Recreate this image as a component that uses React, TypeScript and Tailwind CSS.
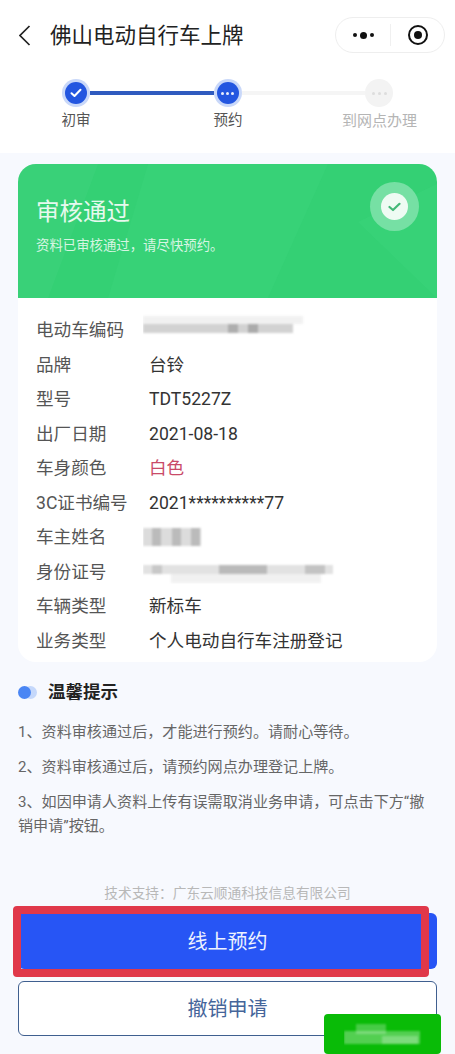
import React from 'react';

const rows = [
  { label: '品牌', value: '台铃' },
  { label: '型号', value: 'TDT5227Z' },
  { label: '出厂日期', value: '2021-08-18' },
  { label: '车身颜色', value: '白色', red: true },
  { label: '3C证书编号', value: '2021**********77' },
];

const tips = [
  '1、资料审核通过后，才能进行预约。请耐心等待。',
  '2、资料审核通过后，请预约网点办理登记上牌。',
  '3、如因申请人资料上传有误需取消业务申请，可点击下方“撤销申请”按钮。',
];

// mosaic over the masked values
const Mosaic = ({ w, h, cells, fill = '#8a8a8a' }: { w: number; h: number; cells: number[][]; fill?: string }) => (
  <svg width={w} height={h} viewBox={`0 0 ${w} ${h}`} className="block">
    <g style={{ filter: 'blur(1px)' }}>
      {cells.map(([x, y, cw, ch, o], i) => (
        <rect key={i} x={x} y={y} width={cw} height={ch} fill={fill} opacity={o} />
      ))}
    </g>
  </svg>
);

const Row = ({ label, children }: { label: string; children: React.ReactNode }) => (
  <div className="grid grid-cols-[113px_1fr] items-center h-[34.5px]">
    <span className="text-[#555]">{label}</span>
    {children}
  </div>
);

const App = () => {
  return (
    <div className="relative w-[455px] h-[1054px] overflow-hidden bg-[#f7f9fe] font-['Roboto','Noto_Sans_CJK_SC',sans-serif]">
      <div className="bg-white h-[153px]">
        <div className="flex items-center h-[70px] pl-[19px] pr-[10px]">
          <svg width="12" height="21" viewBox="0 0 12 21" fill="none">
            <path d="M10.5 1 1 10.5 10.5 20" stroke="#222" strokeWidth="1.7" />
          </svg>
          <span className="ml-[19px] mt-[2px] text-[21.5px] text-[#222]">佛山电动自行车上牌</span>
          <div className="ml-auto flex items-center w-[110px] h-[36px] rounded-full border border-[#eeeeee] bg-white">
            <div className="w-[54px] flex items-center justify-center gap-[3px]">
              <span className="w-[4px] h-[4px] rounded-full bg-[#111]" />
              <span className="w-[7px] h-[7px] rounded-full bg-[#111]" />
              <span className="w-[4px] h-[4px] rounded-full bg-[#111]" />
            </div>
            <div className="w-px h-[22px] bg-[#f0f0f0]" />
            <div className="flex-1 flex items-center justify-center">
              <div className="w-[20px] h-[20px] rounded-full border-[2.5px] border-[#111] flex items-center justify-center">
                <span className="w-[8px] h-[8px] rounded-full bg-[#111]" />
              </div>
            </div>
          </div>
        </div>

        <div className="flex items-center px-[62px] h-[28px] mt-[9px]">
          <div className="w-[28px] h-[28px] rounded-full bg-[#c9d8f9] flex items-center justify-center">
            <div className="w-[22px] h-[22px] rounded-full bg-[#2356e0] flex items-center justify-center">
              <svg width="12" height="10" viewBox="0 0 12 10" fill="none">
                <path d="M1.5 5.2 4.5 8 10.5 1.8" stroke="white" strokeWidth="2" strokeLinecap="round" strokeLinejoin="round" />
              </svg>
            </div>
          </div>
          <div className="flex-1 h-[4px] bg-[#2f5bbf]" />
          <div className="w-[28px] h-[28px] rounded-full bg-[#c9d8f9] flex items-center justify-center">
            <div className="w-[22px] h-[22px] rounded-full bg-[#2356e0] flex items-center justify-center gap-[2px]">
              <span className="w-[3px] h-[3px] rounded-full bg-white/90" />
              <span className="w-[3px] h-[3px] rounded-full bg-white/90" />
              <span className="w-[3px] h-[3px] rounded-full bg-white/90" />
            </div>
          </div>
          <div className="flex-1 h-[4px] bg-[#f5f5f5]" />
          <div className="w-[28px] h-[28px] rounded-full bg-[#f3f3f3] flex items-center justify-center gap-[3px]">
            <span className="w-[3px] h-[3px] rounded-full bg-[#dddddd]" />
            <span className="w-[3px] h-[3px] rounded-full bg-[#dddddd]" />
            <span className="w-[3px] h-[3px] rounded-full bg-[#dddddd]" />
          </div>
        </div>

        <div className="grid grid-cols-[152px_152px_151px] mt-[4px] text-center leading-[20px]">
          <span className="text-[14.5px] text-[#555]">初审</span>
          <span className="text-[14.5px] text-[#555]">预约</span>
          <span className="text-[15px] text-[#b5b5b5]">到网点办理</span>
        </div>
      </div>

      <div className="mx-[18px] mt-[11px] w-[419px] rounded-[18px] bg-white overflow-hidden">
        <div className="relative h-[134px] bg-[#34d074] px-[18px] pt-[32px] text-white">
          <svg width="419" height="134" viewBox="0 0 419 134" className="absolute left-0 top-0">
            <path d="M0 134V0H80L30 134Z" fill="#4fd98a" opacity="0.2" />
            <path d="M130 0H310L250 134H90Z" fill="#3fd880" opacity="0.25" />
            <path d="M340 58 419 20V134Z" fill="#45db88" opacity="0.2" />
          </svg>
          <div className="relative text-[23.5px] leading-[32px] text-[#e6f9ee]">审核通过</div>
          <div className="relative mt-[8px] text-[13.4px] leading-[20px] text-[#d6f5e2]">资料已审核通过，请尽快预约。</div>
          <div className="absolute right-[18px] top-[18px] w-[49px] h-[49px] rounded-full bg-[#76e0a4] flex items-center justify-center">
            <div className="w-[27px] h-[27px] rounded-full bg-[#eefbf3] flex items-center justify-center">
              <svg width="13" height="10" viewBox="0 0 13 10" fill="none">
                <path d="M1.5 5 5 8 11.5 1.8" stroke="#42b877" strokeWidth="2.2" strokeLinecap="round" strokeLinejoin="round" />
              </svg>
            </div>
          </div>
        </div>

        <div className="px-[18px] pt-[15px] pb-[4px] text-[17.6px] leading-[24px]">
          <Row label="电动车编码">
            <div className="-ml-[6px] -mt-[10px]">
              <Mosaic w={165} h={24} cells={[[0, 3, 160, 8, 0.12], [0, 11, 150, 9, 0.38], [85, 11, 10, 9, 0.5], [105, 11, 10, 9, 0.55]]} />
            </div>
          </Row>
          {rows.map((r) => (
            <Row key={r.label} label={r.label}>
              <span className={r.red ? 'text-[#c94a68]' : 'text-[#333]'}>{r.value}</span>
            </Row>
          ))}
          <Row label="车主姓名">
            <div className="-ml-[6px]">
              <Mosaic w={62} h={22} cells={[[0, 2, 58, 18, 0.3], [9, 2, 9, 18, 0.4], [29, 2, 9, 18, 0.4], [48, 2, 9, 18, 0.4]]} />
            </div>
          </Row>
          <Row label="身份证号">
            <div className="-ml-[6px]">
              <Mosaic w={195} h={24} cells={[[0, 5, 190, 9, 0.25], [9, 5, 10, 9, 0.3], [76, 5, 48, 9, 0.45], [162, 5, 20, 9, 0.35], [28, 14, 150, 9, 0.12]]} />
            </div>
          </Row>
          <Row label="车辆类型">
            <span className="text-[#333]">新标车</span>
          </Row>
          <Row label="业务类型">
            <span className="text-[#333]">个人电动自行车注册登记</span>
          </Row>
        </div>
      </div>

      <div className="px-[18px] mt-[18px]">
        <div className="flex items-center h-[24px]">
          <div className="relative w-[19px] h-[13px]">
            <span className="absolute right-0 top-0 w-[13px] h-[13px] rounded-full bg-[#c5d8fb]" />
            <span className="absolute left-0 top-0 w-[13px] h-[13px] rounded-full bg-[#4a86f4]" />
          </div>
          <span className="ml-[11px] text-[17.5px] font-bold text-[#222]">温馨提示</span>
        </div>
        <div className="mt-[16px] flex flex-col gap-[11px] text-[15.1px] leading-[24px] text-[#666]">
          {tips.map((t) => (
            <p key={t}>{t}</p>
          ))}
        </div>
      </div>

      <div className="mt-[46px] text-center text-[13.7px] leading-[18px] text-[#b8b8b8]">技术支持：广东云顺通科技信息有限公司</div>

      <div className="mx-[18px] mt-[11px] flex flex-col gap-[12px]">
        <button className="h-[56px] pt-[2px] rounded-[6px] bg-[#2755f5] text-[20px] text-[#eef2ff]">线上预约</button>
        <button className="h-[55px] rounded-[6px] border border-[#3f5f8f] bg-white text-[20px] text-[#45659a]">撤销申请</button>
      </div>

      <div className="absolute left-[13px] top-[906px] w-[416px] h-[71px] rounded-[4px] border-[8px] border-[#e0384a]" />

      <div className="absolute left-[324px] top-[1014px] w-[117px] h-[40px] rounded-[4px] bg-[#09bb07] flex items-center justify-center">
        <Mosaic w={78} h={24} fill="#ffffff" cells={[[0, 9, 76, 13, 0.3], [12, 2, 30, 10, 0.25], [38, 14, 36, 8, 0.25]]} />
      </div>
    </div>
  );
};

export default App;
